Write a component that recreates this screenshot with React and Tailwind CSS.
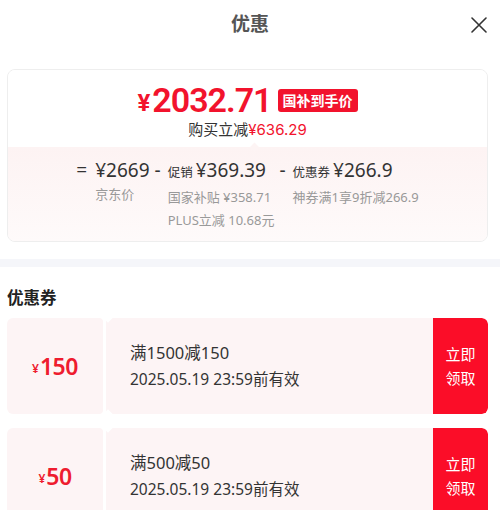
import { useState } from "react"

const font = { fontFamily: '"Noto Sans", "Noto Sans CJK SC", sans-serif' }

const coupons = [
    { id: 1, amount: "150", title: "满1500减150", expire: "2025.05.19 23:59前有效" },
    { id: 2, amount: "50", title: "满500减50", expire: "2025.05.19 23:59前有效" },
]

function Coupon({ c }) {
    const [taken, setTaken] = useState(false)
    return (
        <div className="relative flex h-[96px] rounded-md overflow-hidden">
            <div className="w-[96px] shrink-0 flex items-center justify-center bg-[#fdf4f5] rounded-r-[4px] text-[#ee1c2f]">
                <span className="text-[12px] font-semibold leading-none mt-[6px] mr-[1px]">¥</span>
                <span className="text-[23px] font-semibold leading-none tracking-[-0.5px]">{c.amount}</span>
            </div>
            <div className="w-[3px] shrink-0" />
            <div className="flex-1 flex flex-col justify-center pl-[24px] bg-[#fdf4f5] rounded-l-[4px] text-[#333]">
                <div className="text-[16.5px] leading-[26px]">{c.title}</div>
                <div className="text-[15.5px] leading-[26px]">{c.expire}</div>
            </div>
            <button
                onClick={() => setTaken(!taken)}
                className="w-[55px] shrink-0 bg-[#fb0d28] text-white text-[15px] leading-[24px] flex flex-col items-center justify-center rounded-r-md">
                <span>{taken ? "已" : "立即"}</span>
                <span>领取</span>
            </button>
            {/* perforation notches */}
            <div className="absolute left-[97px] top-[-5px] w-[8px] h-[8px] bg-white rotate-45" />
            <div className="absolute left-[97px] bottom-[-5px] w-[8px] h-[8px] bg-white rotate-45" />
        </div>
    )
}

export default function App() {
    return (
        <div className="w-[500px] h-[510px] overflow-hidden bg-white" style={font}>
            {/* header */}
            <div className="relative h-[48px] flex items-center justify-center">
                <h1 className="text-[19px] font-bold text-[#555]">优惠</h1>
                <svg className="absolute right-[13px] top-[17px]" width="16" height="16" viewBox="0 0 16 16">
                    <path d="M1 1 L15 15 M15 1 L1 15" stroke="#333" strokeWidth="1.6" strokeLinecap="round" />
                </svg>
            </div>

            {/* price summary card */}
            <div className="pl-[7px] pr-[12px] mt-[21px]">
                <div className="border border-[#eeeeee] rounded-lg overflow-hidden">
                    <div className="relative h-[77px] flex flex-col items-center pt-[10px] bg-white">
                        <div className="flex items-center h-[40px] font-['Roboto',sans-serif] text-[#f2132d]">
                            <span className="relative top-[3px] text-[24px] font-bold leading-[40px] mr-[2px]">¥</span>
                            <span className="text-[34px] font-semibold tracking-[-1px] leading-[40px]">2032.71</span>
                            <span className="ml-[6px] h-[23px] px-[5px] rounded-[3px] bg-[#f2132d] text-white text-[14px] leading-none font-bold flex items-center font-['Noto_Sans_CJK_SC',sans-serif]">国补到手价</span>
                        </div>
                        <div className="text-[15px] leading-[18px] text-[#333] mt-[1px] font-['Inter','Noto_Sans_CJK_SC',sans-serif]">
                            购买立减<span className="text-[#f2132d]">¥636.29</span>
                        </div>
                        <div className="absolute bottom-[-4px] left-[243px] w-[7px] h-[7px] bg-[#fdf4f4] rotate-45" />
                    </div>
                    <div className="h-[94px] bg-gradient-to-b from-[#fdf3f3] to-[#fefafa] flex justify-center items-start pt-[10px] gap-[5px] text-[#333]">
                        <div className="flex gap-[8px]">
                            <span className="text-[19px] leading-[26px]">=</span>
                            <div className="flex flex-col">
                                <span className="text-[19px] leading-[26px]">¥2669</span>
                                <span className="text-[13px] leading-[23px] text-[#999]">京东价</span>
                            </div>
                        </div>
                        <div className="flex gap-[7px]">
                            <span className="text-[19px] leading-[26px]">-</span>
                            <div className="flex flex-col">
                                <span className="text-[19px] leading-[26px]">
                                    <span className="text-[12.5px] mr-[3px]">促销</span>¥369.39
                                </span>
                                <span className="text-[13px] leading-[23px] text-[#999]">国家补贴 ¥358.71</span>
                                <span className="text-[13px] leading-[23px] text-[#999]">PLUS立减 10.68元</span>
                            </div>
                        </div>
                        <div className="flex gap-[7px]">
                            <span className="text-[19px] leading-[26px]">-</span>
                            <div className="flex flex-col">
                                <span className="text-[19px] leading-[26px]">
                                    <span className="text-[12.5px] mr-[3px]">优惠券</span>¥266.9
                                </span>
                                <span className="text-[13px] leading-[23px] text-[#999]">神券满1享9折减266.9</span>
                            </div>
                        </div>
                    </div>
                </div>
            </div>

            {/* divider band */}
            <div className="mt-[17px] h-[8px] bg-[#f5f6fa]" />

            {/* coupons */}
            <div className="pl-[7px] pr-[12px]">
                <h2 className="text-[16.5px] font-bold text-[#222] leading-[24px] mt-[19px] mb-[8px]">优惠券</h2>
                <div className="flex flex-col gap-[14px]">
                    {coupons.map(c => <Coupon key={c.id} c={c} />)}
                </div>
            </div>
        </div>
    )
}
